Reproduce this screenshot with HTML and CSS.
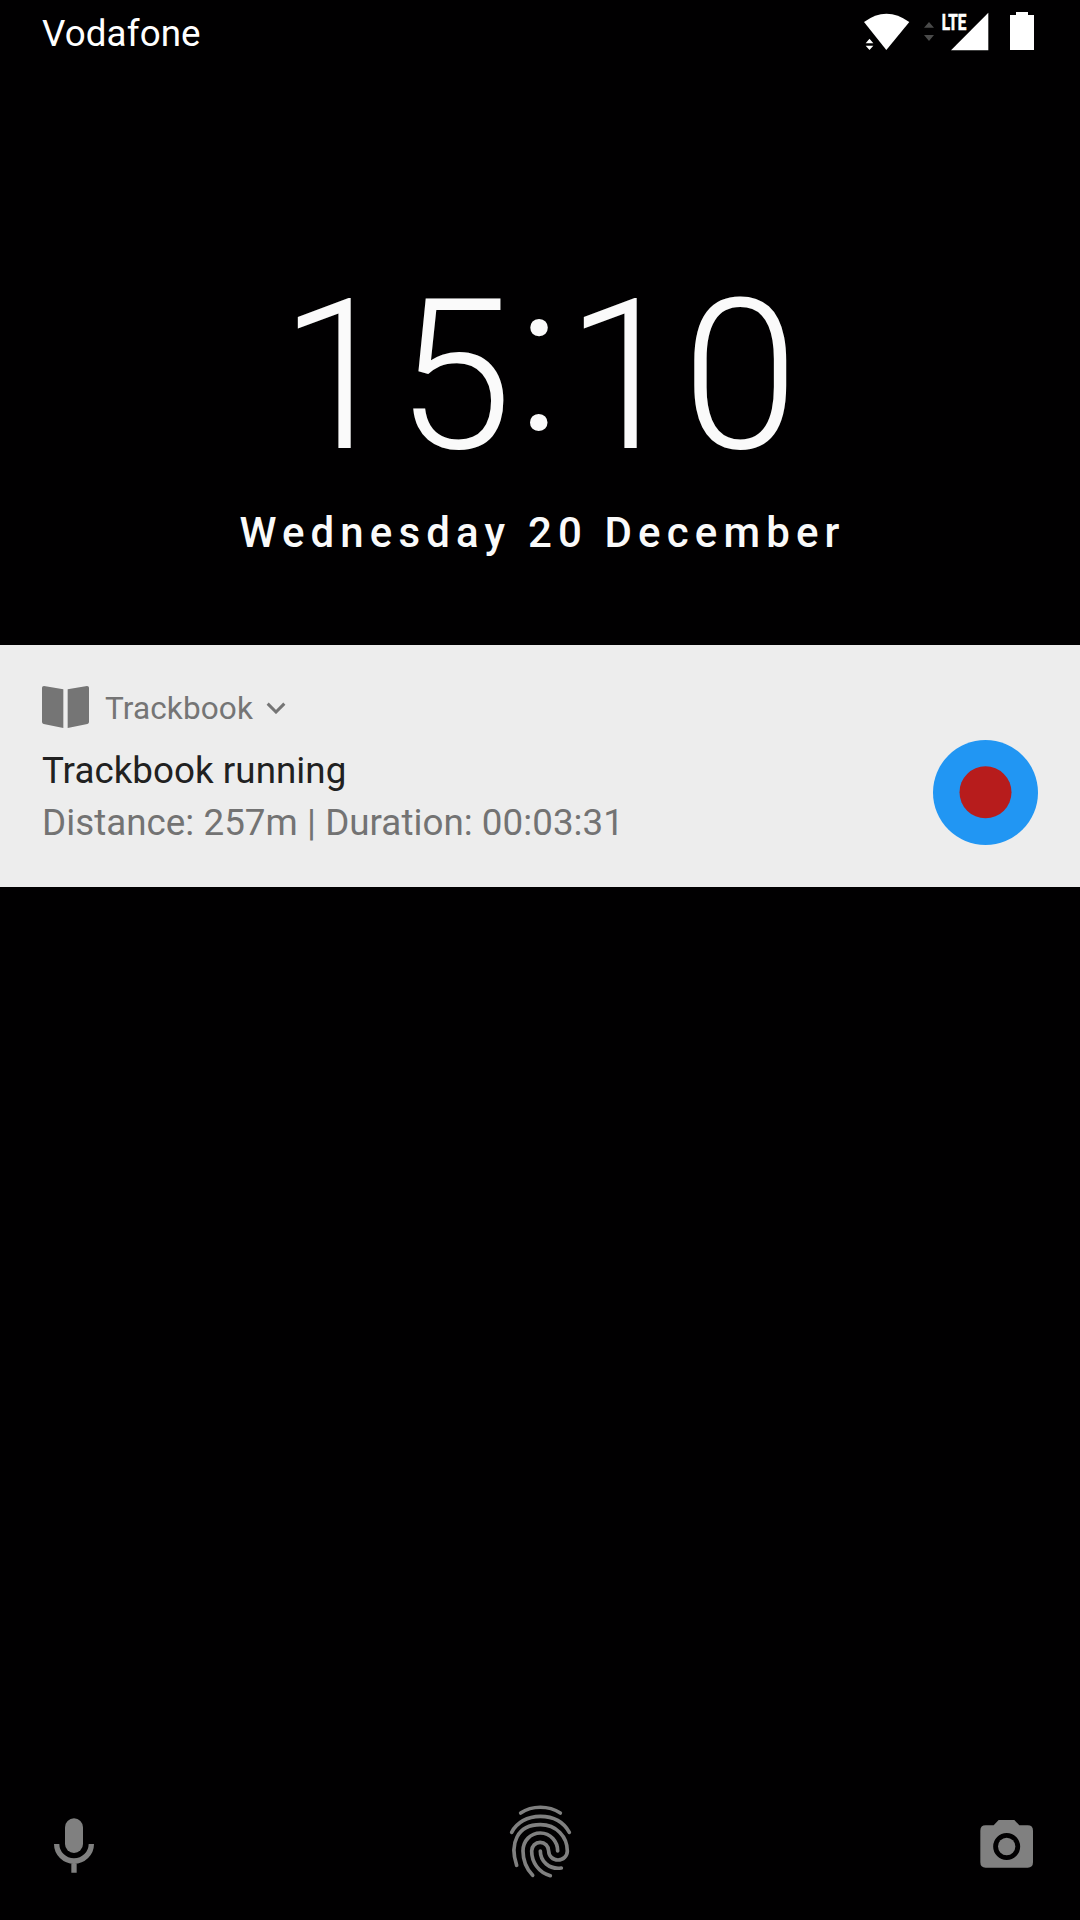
FILE: index.html
```html
<!DOCTYPE html>
<html lang="en">
<head>
<meta charset="utf-8">
<title>Lock screen</title>
<link rel="stylesheet" href="styles.css">
</head>
<body>
<main class="lockscreen">
  <header class="status-bar">
    <span class="carrier">Vodafone</span>
    <svg class="status-icons" viewBox="0 0 720 210">
      <path d="M139 150 72 66Q139 16 208 66Z"/>
      <path d="M77 130 88.500 116 100 130ZM77 137H100L88.500 150Z"/>
      <path class="dim" d="M252 83 267 66 282 83ZM252 105H282L267 123Z"/>
      <text class="lte" x="305" y="89" textLength="74" lengthAdjust="spacingAndGlyphs">LTE</text>
      <path d="M333 151 445 38V151Z"/>
      <path d="M528 36H564V45H582V150H510V45H528Z"/>
    </svg>
  </header>
  <section class="clock">
    <time class="time">15<span class="colon">:</span>10</time>
    <div class="date">Wednesday 20 December</div>
  </section>
  <article class="notification">
    <div class="content">
      <div class="app">
        <svg class="book" viewBox="0 0 141 126"><path d="M6 0 64 10V126L5 114Q0 113 0 108V5Q0 0 6 0ZM135 0 77 10V126L136 114Q141 113 141 108V5Q141 0 135 0Z"/></svg>
        <span class="app-name">Trackbook</span>
        <svg class="chevron" viewBox="0 0 60 36"><path d="M5 5 30 30 55 5"/></svg>
      </div>
      <div class="title">Trackbook running</div>
      <div class="text">Distance: 257m | Duration: 00:03:31</div>
    </div>
    <svg class="record" viewBox="0 0 105 105"><circle class="disc" cx="52.500" cy="52.500" r="52.500"/><circle class="dot" cx="52.500" cy="52.300" r="26"/></svg>
  </article>
  <footer class="shortcuts">
    <svg class="shortcut" viewBox="0 0 270 270">
      <rect x="105" y="55" width="54" height="104" rx="27"/>
      <path class="mic-stand" d="M80 132A52 51 0 0 0 184 132M132 184V218"/>
    </svg>
    <svg class="fingerprint" viewBox="0 0 300 300">
      <path d="M92 69C126 46 176 46 211 69M65 127C80 98 112 79 151 79C192 79 222 98 238 127M80 226C58 160 82 104 151 104C199 104 232 140 232 183A28 27 0 0 1 176 183A25.500 26 0 0 0 125 183C125 216 145 247 181 257M128 256C108 235 99 213 99 183C99 152 122 129 151 129C182 129 203 155 203 183M151 183C151 214 177 239 214 234"/>
    </svg>
    <svg class="shortcut" viewBox="0 0 270 270">
      <path fill-rule="evenodd" d="M116 60H163L178 76H203Q219 76 219 92V187Q219 203 203 203H77Q61 203 61 187V92Q61 76 77 76H101ZM140 99A40.500 40.500 0 1 0 140 180A40.500 40.500 0 1 0 140 99Z"/>
      <circle cx="140" cy="139.500" r="26"/>
    </svg>
  </footer>
</main>
</body>
</html>
```
FILE: styles.css
```css
body {
  margin: 0;
  background: #010001;
  font-family: Roboto, sans-serif;
}

.lockscreen {
  display: flex;
  flex-direction: column;
  width: 1080px;
  height: 1920px;
  box-sizing: border-box;
  padding-bottom: 30px;
}

.status-bar {
  display: flex;
  justify-content: space-between;
  height: 70px;
  padding-left: 42px;
  color: #fff;
}

.carrier {
  font-size: 36.75px;
  line-height: 67px;
  letter-spacing: 0.12px;
}

.status-icons {
  width: 240px;
  height: 70px;
  fill: #fff;
}

.status-icons .dim {
  fill: #4a4a4a;
}

.lte {
  font-size: 66px;
  font-weight: 700;
  stroke: #fff;
  stroke-width: 2px;
}

.clock {
  display: flex;
  flex-direction: column;
  align-items: center;
  height: 575px;
  box-sizing: border-box;
  padding-top: 196px;
  color: #fafafa;
}

.time {
  height: 220px;
  padding-right: 2px;
  font-size: 210px;
  font-weight: 300;
  line-height: 220px;
}

.colon {
  display: inline-block;
  padding: 0 4.5px;
  line-height: 180px;
  vertical-align: 18px;
}

.date {
  margin-top: 17px;
  padding-left: 5px;
  font-size: 42px;
  font-weight: 500;
  line-height: 60px;
  letter-spacing: 6.15px;
}

.notification {
  display: flex;
  justify-content: space-between;
  height: 242px;
  box-sizing: border-box;
  padding: 38px 42px 0;
  background: #ededed;
}

.app {
  display: flex;
  align-items: center;
  height: 50px;
  color: #757575;
}

.book {
  width: 47px;
  height: 42px;
  margin-right: 16px;
  margin-top: -3px;
  fill: #757575;
}

.app-name {
  padding-top: 1px;
  font-size: 31.5px;
  line-height: 50px;
  letter-spacing: 0.13px;
}

.chevron {
  width: 20px;
  height: 12px;
  margin-left: 13px;
  fill: none;
  stroke: #757575;
  stroke-width: 9px;
}

.title,
.text {
  font-size: 36.75px;
  line-height: 52px;
  letter-spacing: 0.04px;
}

.title {
  margin-top: 12px;
  color: #212121;
}

.text {
  color: #737373;
}

.record {
  width: 105px;
  height: 105px;
  margin-top: 57px;
}

.disc {
  fill: #2196f3;
}

.dot {
  fill: #b71c1c;
}

.shortcuts {
  display: flex;
  justify-content: space-between;
  align-items: flex-end;
  height: 100px;
  margin-top: auto;
  padding: 0 30px;
  fill: #808080;
}

.shortcut {
  width: 90px;
  height: 90px;
}

.mic-stand {
  fill: none;
  stroke: #808080;
  stroke-width: 16px;
}

.fingerprint {
  width: 100px;
  height: 100px;
  fill: none;
  stroke: #808080;
  stroke-width: 11px;
  stroke-linecap: round;
}
```
